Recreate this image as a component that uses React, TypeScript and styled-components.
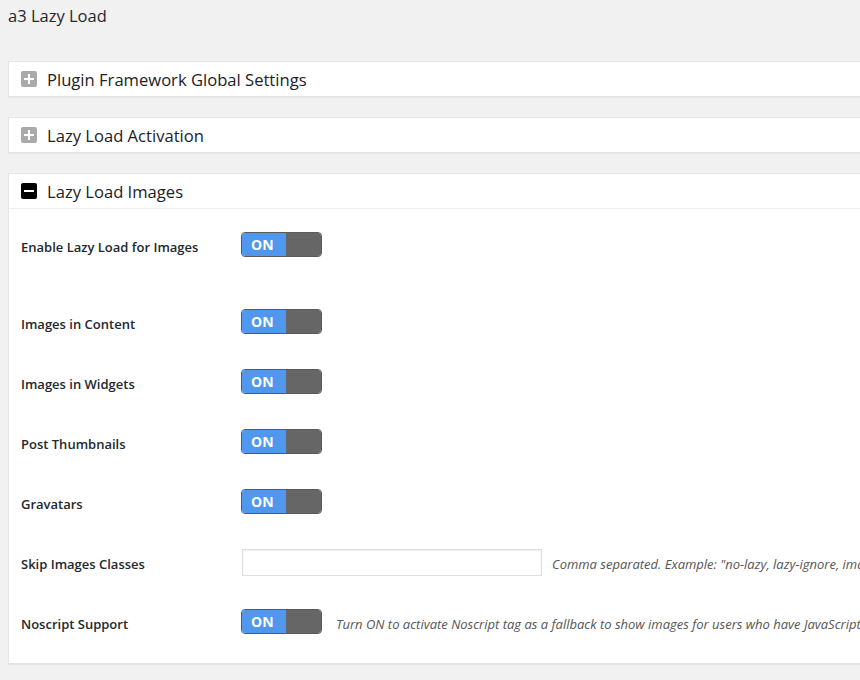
import React from "react";
import styled, { createGlobalStyle } from "styled-components";

const GlobalStyle = createGlobalStyle`
  html, body {
    margin: 0;
    padding: 0;
    background: #f1f1f1;
    overflow: hidden;
  }
  body {
    font-family: "Open Sans", "Noto Sans", "Liberation Sans", sans-serif;
    color: #23282d;
  }
`;

const Page = styled.div`
  width: 1200px;
  padding: 6px 0 0 8px;
`;

const PageTitle = styled.h1`
  margin: 0 0 35px;
  font-size: 16.5px;
  font-weight: 400;
  line-height: 20px;
  color: #23282d;
`;

const Panel = styled.section`
  background: #fff;
  border: 1px solid #e5e5e5;
  box-shadow: 0 1px 1px rgba(0, 0, 0, 0.04);
  margin-bottom: 20px;
`;

const PanelHeader = styled.div<{ $open?: boolean }>`
  display: flex;
  align-items: center;
  gap: 10px;
  height: 34px;
  padding: 0 12px;
  border-bottom: ${(p) => (p.$open ? "1px solid #eee" : "none")};
`;

const PanelTitle = styled.h2`
  margin: 0;
  font-size: 16.6px;
  font-weight: 400;
  color: #1d2125;
`;

const ToggleIcon = styled.span<{ $open?: boolean }>`
  position: relative;
  width: 16px;
  height: 16px;
  border-radius: 2px;
  background: ${(p) => (p.$open ? "#000" : "#aaa")};
  flex-shrink: 0;

  &::before,
  &::after {
    content: "";
    position: absolute;
    background: #fff;
  }
  &::before {
    left: 3px;
    right: 3px;
    top: 7px;
    height: 2px;
  }
  &::after {
    display: ${(p) => (p.$open ? "none" : "block")};
    top: 3px;
    bottom: 3px;
    left: 7px;
    width: 2px;
  }
`;

const PanelBody = styled.div`
  padding: 8px 12px 9px;
`;

const Row = styled.div`
  display: flex;
  align-items: center;
  height: 60px;
`;

const Spacer = styled.div`
  height: 17px;
`;

const Label = styled.label`
  width: 220px;
  flex-shrink: 0;
  font-size: 13px;
  font-weight: 600;
  color: #23282d;
`;

const Switch = styled.span`
  display: inline-flex;
  width: 81px;
  height: 25px;
  margin-bottom: 6px;
  box-sizing: border-box;
  border: 1px solid #5a5a5a;
  border-radius: 4px;
  overflow: hidden;
  flex-shrink: 0;
`;

const SwitchOn = styled.span`
  display: flex;
  align-items: center;
  width: 44px;
  padding-left: 9px;
  box-sizing: border-box;
  background: #5097ee;
  color: #fff;
  font-size: 14px;
  font-weight: 700;
  font-family: "Open Sans", "Liberation Sans", sans-serif;
`;

const SwitchOff = styled.span`
  flex: 1;
  background: #666;
`;

const TextInput = styled.input`
  width: 300px;
  height: 27px;
  box-sizing: border-box;
  margin: 0 0 4px 1px;
  border: 1px solid #ddd;
  box-shadow: inset 0 1px 2px rgba(0, 0, 0, 0.07);
  background: #fff;
  flex-shrink: 0;
`;

const Description = styled.span<{ $gap: number }>`
  margin-left: ${(p) => p.$gap}px;
  font-size: 13px;
  font-style: italic;
  color: #555;
  white-space: nowrap;
`;

function OnSwitch() {
  return (
    <Switch>
      <SwitchOn>ON</SwitchOn>
      <SwitchOff />
    </Switch>
  );
}

const toggleRows = [
  "Images in Content",
  "Images in Widgets",
  "Post Thumbnails",
  "Gravatars",
];

export default function App() {
  return (
    <>
      <GlobalStyle />
      <Page>
        <PageTitle>a3 Lazy Load</PageTitle>

        <Panel>
          <PanelHeader>
            <ToggleIcon />
            <PanelTitle>Plugin Framework Global Settings</PanelTitle>
          </PanelHeader>
        </Panel>

        <Panel>
          <PanelHeader>
            <ToggleIcon />
            <PanelTitle>Lazy Load Activation</PanelTitle>
          </PanelHeader>
        </Panel>

        <Panel>
          <PanelHeader $open>
            <ToggleIcon $open />
            <PanelTitle>Lazy Load Images</PanelTitle>
          </PanelHeader>
          <PanelBody>
            <Row>
              <Label>Enable Lazy Load for Images</Label>
              <OnSwitch />
            </Row>
            <Spacer />
            {toggleRows.map((label) => (
              <Row key={label}>
                <Label>{label}</Label>
                <OnSwitch />
              </Row>
            ))}
            <Row>
              <Label>Skip Images Classes</Label>
              <TextInput type="text" />
              <Description $gap={10}>
                Comma separated. Example: "no-lazy, lazy-ignore, image-235"
              </Description>
            </Row>
            <Row>
              <Label>Noscript Support</Label>
              <OnSwitch />
              <Description $gap={14}>
                Turn ON to activate Noscript tag as a fallback to show images for
                users who have JavaScript disabled in their browser.
              </Description>
            </Row>
          </PanelBody>
        </Panel>
      </Page>
    </>
  );
}
